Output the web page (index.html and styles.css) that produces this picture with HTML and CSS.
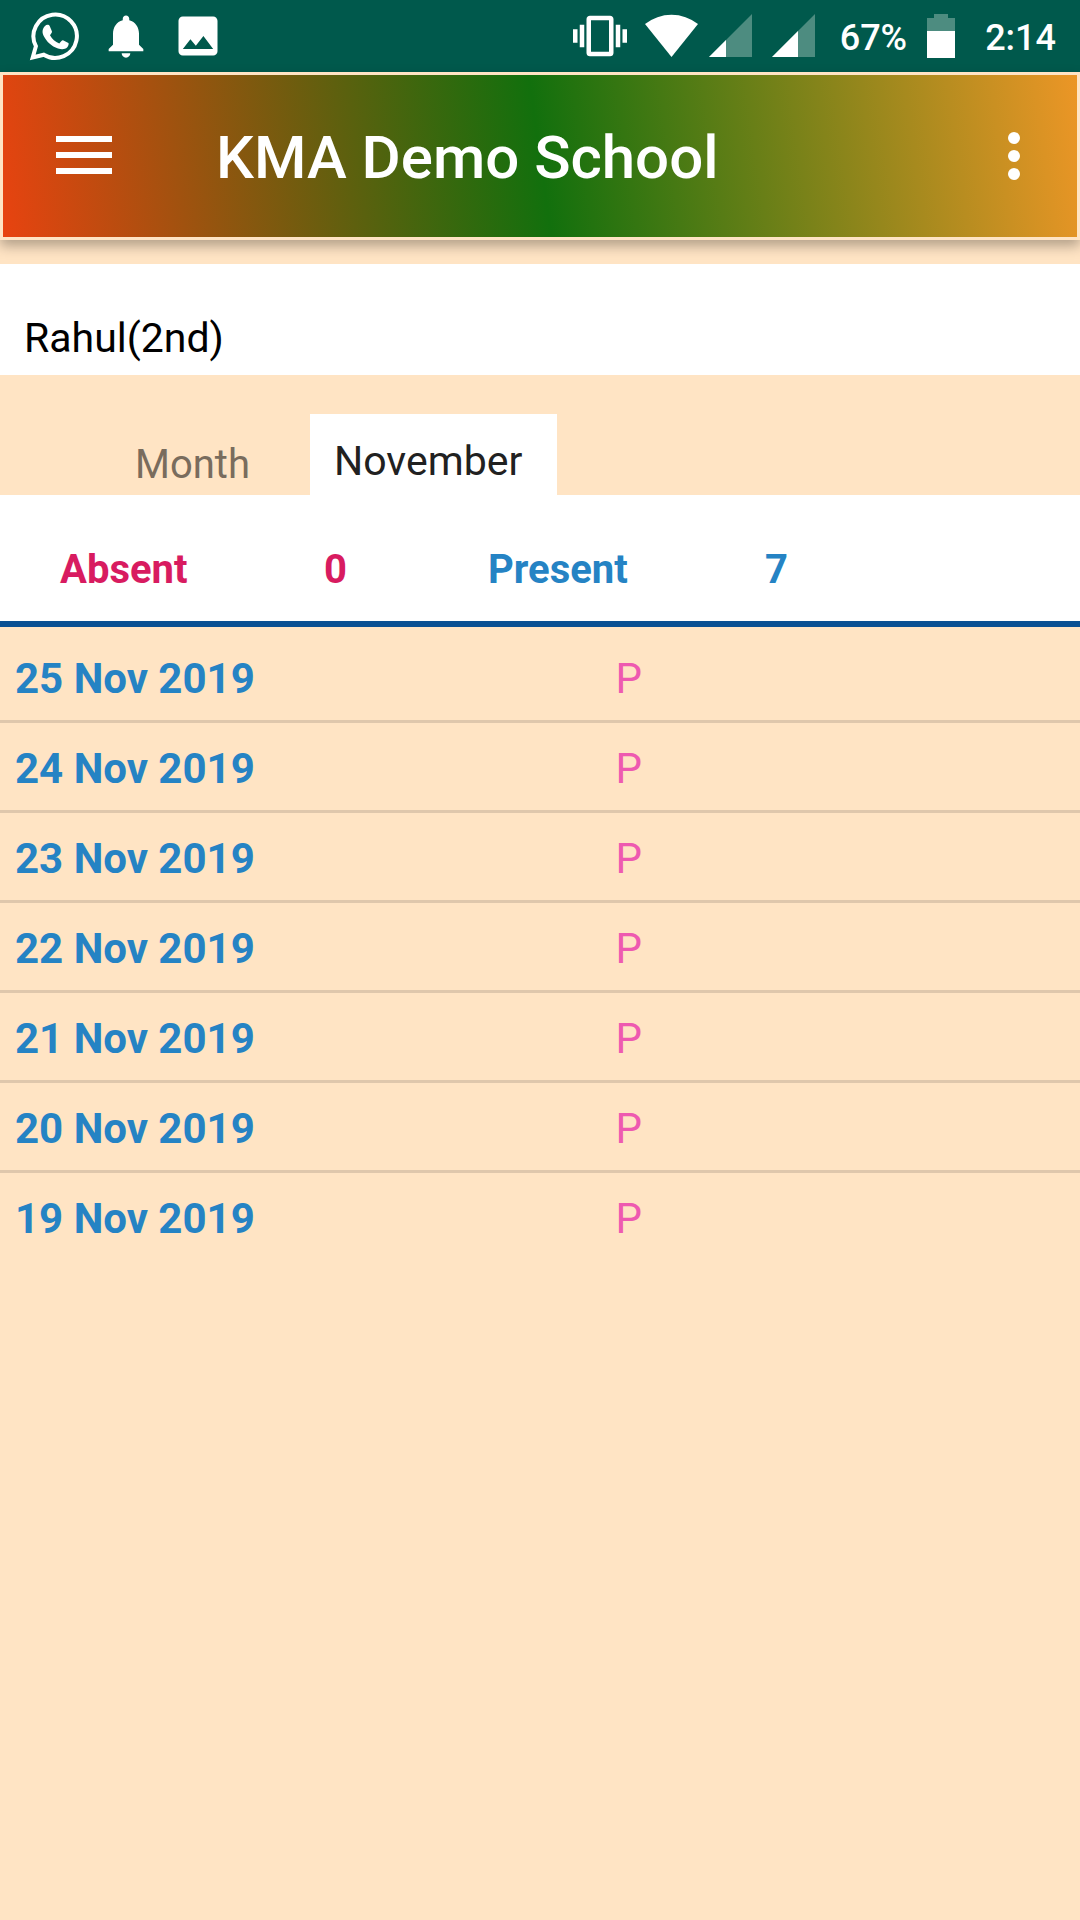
FILE: index.html
```
<!DOCTYPE html>
<html lang="en">
<head>
<meta charset="UTF-8">
<meta name="viewport" content="width=device-width, initial-scale=1.0">
<title>KMA Demo School</title>
<link rel="stylesheet" href="styles.css">
</head>
<body>

<!-- Status bar -->
<div class="status-bar">
    <div class="status-left">
        <svg class="notify-icon" viewBox="0 0 52 52" aria-hidden="true">
            <path d="M4.700 47.500 7.900 36.200A21.700 21.700 0 1 1 15.800 44.700Z" fill="none" stroke="#fff" stroke-width="4"/>
            <path d="M17 16c1.500-1.700 4-1.500 4.800.2l2.100 5c.3 1-.2 1.800-1.900 4 2.200 4 5.200 6.600 9.300 8.200 1.600-1.700 2.600-3.400 3.700-3.200l5.400 2.700c.8.500-.2 3.300-1.100 4.300-2.400 2.300-5.700 2.400-9.300 1.200-6.600-2.200-11.300-6.800-14.300-12.500-1.800-3.400-1.500-7.200 1.300-9.900z" fill="#fff"/>
        </svg>
        <svg class="notify-icon" viewBox="0 0 24 24" aria-hidden="true">
            <path d="M12 22c1.100 0 2-.9 2-2h-4c0 1.100.89 2 2 2zm6-6v-5c0-3.070-1.640-5.640-4.500-6.320V4c0-.83-.67-1.500-1.500-1.500s-1.500.67-1.500 1.500v.68C7.630 5.360 6 7.920 6 11v5l-2 2v1h16v-1l-2-2z" fill="#fff"/>
        </svg>
        <svg class="notify-icon" viewBox="0 0 24 24" aria-hidden="true">
            <path d="M21 19V5c0-1.100-.9-2-2-2H5c-1.100 0-2 .9-2 2v14c0 1.100.9 2 2 2h14c1.100 0 2-.9 2-2zM8.500 13.500l2.500 3.010L14.500 12l4.500 6H5l3.500-4.500z" fill="#fff"/>
        </svg>
    </div>
    <div class="status-right">
        <svg class="vibrate-icon" viewBox="0 0 24 24" aria-hidden="true">
            <path d="M0 15h2V9H0v6zm3 2h2V7H3v10zm19-8v6h2V9h-2zm-3 8h2V7h-2v10zM16.500 3h-9C6.670 3 6 3.670 6 4.500v15c0 .83.67 1.500 1.500 1.500h9c.83 0 1.500-.67 1.500-1.500v-15c0-.83-.67-1.500-1.500-1.500zM16 19H8V5h8v14z" fill="#fff"/>
        </svg>
        <svg class="wifi-icon" viewBox="0 0 54 44" aria-hidden="true">
            <path d="M26.500 43 0 10A43 43 0 0 1 53 10Z" fill="#fff"/>
        </svg>
        <svg class="signal-icon" viewBox="0 0 63 44" aria-hidden="true">
            <path d="M10 43 53 0V43Z" fill="#4d8c80"/>
            <path d="M10 43 27 26V43Z" fill="#fff"/>
        </svg>
        <svg class="signal-icon" viewBox="0 0 63 44" aria-hidden="true">
            <path d="M10 43 53 0V43Z" fill="#4d8c80"/>
            <path d="M10 43 36 17V43Z" fill="#fff"/>
        </svg>
        <span class="battery-text">67%</span>
        <svg class="battery-icon" viewBox="0 0 28 44" aria-hidden="true">
            <path d="M7 0h14v4h7v13H0V4h7z" fill="#4d8c80"/>
            <path d="M0 17h28v27H0z" fill="#fff"/>
        </svg>
        <span class="clock">2:14</span>
    </div>
</div>

<!-- App bar -->
<header class="app-bar">
    <button class="menu-button" type="button" aria-label="Menu">
        <svg viewBox="0 0 56 40" width="56" height="40"><path d="M0 0h56v6H0zM0 16h56v6H0zM0 32h56v6H0z" fill="#fff"/></svg>
    </button>
    <h1 class="title">KMA Demo School</h1>
    <button class="more-button" type="button" aria-label="More options">
        <svg viewBox="0 0 12 48" width="12" height="48"><circle cx="6" cy="6" r="6" fill="#fff"/><circle cx="6" cy="24" r="6" fill="#fff"/><circle cx="6" cy="42" r="6" fill="#fff"/></svg>
    </button>
</header>

<main>
    <p class="student">Rahul(2nd)</p>

    <div class="month-row">
        <label class="month-label" for="month">Month</label>
        <select class="month-select" id="month">
            <option>November</option>
        </select>
    </div>

    <!-- Totals of the month -->
    <div class="summary">
        <span class="absent">Absent</span>
        <span class="absent">0</span>
        <span class="present">Present</span>
        <span class="present">7</span>
    </div>

    <table class="attendance">
        <tr><td class="date">25 Nov 2019</td><td class="mark">P</td></tr>
        <tr><td class="date">24 Nov 2019</td><td class="mark">P</td></tr>
        <tr><td class="date">23 Nov 2019</td><td class="mark">P</td></tr>
        <tr><td class="date">22 Nov 2019</td><td class="mark">P</td></tr>
        <tr><td class="date">21 Nov 2019</td><td class="mark">P</td></tr>
        <tr><td class="date">20 Nov 2019</td><td class="mark">P</td></tr>
        <tr><td class="date">19 Nov 2019</td><td class="mark">P</td></tr>
    </table>
</main>

</body>
</html>
```

FILE: styles.css
```
* {
    box-sizing: border-box;
}
body {
    margin: 0;
    min-height: 100vh;
    background-color: #ffe4c4;
    font-family: Roboto, sans-serif;
    font-size: 42px;
    color: #000;
}

/* Status bar */
.status-bar {
    display: flex;
    justify-content: space-between;
    align-items: center;
    height: 72px;
    padding: 0 24px 0 28px;
    background-color: #00594c;
    color: #fff;
    font-size: 36px;
    font-weight: 500;
}
.status-left,
.status-right {
    display: flex;
    align-items: center;
}
.status-left {
    gap: 20px;
}
.notify-icon {
    width: 52px;
    height: 52px;
}
.vibrate-icon {
    width: 54px;
    height: 54px;
    margin-right: 18px;
}
.wifi-icon {
    width: 54px;
    height: 44px;
}
.signal-icon {
    width: 63px;
    height: 44px;
}
.battery-text,
.clock {
    padding-top: 3px;
}
.battery-text {
    margin: 0 20px 0 15px;
}
.battery-icon {
    width: 28px;
    height: 44px;
    margin-right: 30px;
}

/* App bar */
.app-bar {
    display: flex;
    align-items: center;
    height: 168px;
    padding: 0 37px 0 33px;
    border: 3px solid #ffe4c4;
    background: linear-gradient(82deg, #e84310, #12700d 50%, #ec9626) padding-box;
    box-shadow: 0 6px 12px rgba(0, 0, 0, 0.3);
}
.menu-button,
.more-button {
    display: flex;
    align-items: center;
    justify-content: center;
    height: 96px;
    padding: 0;
    border: none;
    background: none;
    cursor: pointer;
}
.menu-button {
    width: 96px;
}
.more-button {
    width: 52px;
}
.title {
    flex: 1;
    margin: 0 0 0 84px;
    padding-top: 4px;
    font-size: 60px;
    font-weight: 500;
    line-height: 72px;
    color: #fff;
}

/* Student name */
.student {
    margin: 24px 0 0;
    padding: 50px 24px 13px;
    background-color: #fff;
    font-size: 41px;
    line-height: 48px;
}

/* Month picker */
.month-row {
    display: flex;
    align-items: flex-end;
    padding-top: 39px;
}
.month-label {
    width: 310px;
    padding: 0 60px 6px 0;
    text-align: right;
    font-size: 40px;
    line-height: 48px;
    color: #796c5d;
}
.month-select {
    width: 247px;
    height: 81px;
    padding: 12px 24px 0;
    border: none;
    border-radius: 0;
    appearance: none;
    background-color: #fff;
    font: inherit;
    font-size: 41px;
    color: #212121;
}

/* Totals */
.summary {
    display: grid;
    grid-template-columns: 264fr 164fr 277fr 315fr;
    padding: 51px 0 27px 60px;
    border-bottom: 6px solid #0a5093;
    background-color: #fff;
    font-size: 40px;
    font-weight: 700;
    line-height: 48px;
}
.absent {
    color: #d81b60;
}
.present {
    color: #2583c4;
}

/* Attendance list */
.attendance {
    width: 100%;
    padding-top: 6px;
    border-spacing: 0;
}
.attendance td {
    height: 90px;
    padding: 4px 0 0;
    border-bottom: 3px solid #dfc7ac;
}
.attendance tr:last-child td {
    height: 87px;
    border-bottom: none;
}
.attendance .date {
    width: 57%;
    padding-left: 15px;
    font-weight: 700;
    color: #2583c4;
}
.mark {
    color: #ee5ab0;
}
```
